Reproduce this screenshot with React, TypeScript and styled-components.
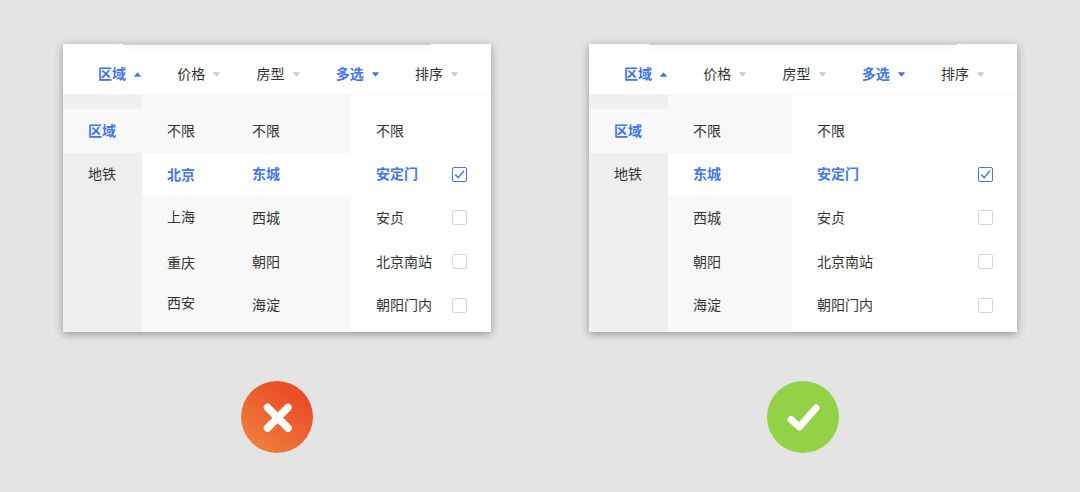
import React, { useState } from 'react';
import styled, { createGlobalStyle, css } from 'styled-components';

const GlobalStyle = createGlobalStyle`
  *, *::before, *::after { box-sizing: border-box; }
  body {
    margin: 0;
    background: #e4e4e4;
    color: #333;
    font-family: "Noto Sans CJK SC", "Noto Sans", sans-serif;
    font-size: 14px;
    line-height: 20px;
  }
  button { margin: 0; border: 0; padding: 0; background: none; font: inherit; color: inherit; cursor: pointer; }
`;

const BLUE = '#4375f0';

const Page = styled.main`
  display: grid;
  grid-template-columns: 1fr 1fr;
  column-gap: 98px;
  padding: 44px 63px 39px;
`;

const Example = styled.section`
  display: flex;
  flex-direction: column;
  align-items: center;
  gap: 49px;
`;

const Card = styled.div`
  width: 100%;
  background: #fff;
  box-shadow: 0 2px 8px rgba(0, 0, 0, 0.36);
`;

const TabBar = styled.nav`
  position: relative;
  display: flex;
  justify-content: space-between;
  overflow: hidden;
  padding: 19px 33px 9px 35px;
  border-bottom: 1px solid #f5f5f5;

  &::before {
    content: '';
    position: absolute;
    top: 0;
    left: 14%;
    right: 14%;
    height: 1px;
    background: #d2d2d2;
    box-shadow: 0 2px 10px rgba(0, 0, 0, 0.24);
  }
`;

const active = css`
  color: ${BLUE};
  font-weight: 600;
`;

const Tab = styled.button<{ $active?: boolean }>`
  display: flex;
  align-items: center;
  gap: 8px;
  ${(p) => p.$active && active}
`;

const Label = styled.span`
  padding-bottom: 2px;
`;

const Arrow = styled.svg<{ $active?: boolean; $up?: boolean }>`
  width: 7px;
  height: 5px;
  fill: ${(p) => (p.$active ? BLUE : '#ccc')};
  transform: ${(p) => (p.$up ? 'rotate(180deg)' : 'none')};
`;

const Columns = styled.div`
  display: flex;
  min-height: 237px;
`;

const Column = styled.div<{ $width?: number; $tone: string; $rows?: string }>`
  display: grid;
  grid-template-rows: ${(p) => p.$rows ?? 'repeat(5, 1fr)'};
  flex: ${(p) => (p.$width ? `0 0 ${p.$width}px` : '1')};
  padding: 14px 0 5px;
  background: ${(p) => p.$tone};
`;

const Option = styled.button<{ $active?: boolean; $fill?: string }>`
  display: flex;
  align-items: center;
  padding-left: 25px;
  text-align: left;
  ${(p) => p.$active && active}
  background: ${(p) => (p.$active && p.$fill) || 'transparent'};
`;

const CheckOption = styled.label<{ $active?: boolean }>`
  display: flex;
  align-items: center;
  justify-content: space-between;
  padding: 0 24px 0 25px;
  cursor: pointer;
  ${(p) => p.$active && active}
`;

const BoxWrap = styled.span`
  display: grid;
  width: 15px;
  height: 15px;

  & > * { grid-area: 1 / 1; }
`;

const Box = styled.input`
  appearance: none;
  width: 15px;
  height: 15px;
  margin: 0;
  border: 1px solid #d6d6da;
  border-radius: 2px;
  background: #fff;

  &:checked { border-color: ${BLUE}; }
`;

const Tick = styled.svg`
  width: 15px;
  height: 15px;
  pointer-events: none;
  fill: none;
  stroke: ${BLUE};
  stroke-width: 1.5;
`;

const Badge = styled.svg`
  width: 72px;
  height: 72px;
`;

const tabs = [
  { name: '区域', active: true, up: true },
  { name: '价格' },
  { name: '房型' },
  { name: '多选', active: true },
  { name: '排序' },
];
const sides = ['区域', '地铁'];
const cities = ['不限', '北京', '上海', '重庆', '西安'];
const districts = ['不限', '东城', '西城', '朝阳', '海淀'];
const places = ['安定门', '安贞', '北京南站', '朝阳门内'];

interface ListProps {
  items: string[];
  initial: string;
  tone: string;
  fill: string;
  width: number;
  rows?: string;
}

function OptionList({ items, initial, tone, fill, width, rows }: ListProps) {
  const [picked, setPicked] = useState(initial);
  return (
    <Column $width={width} $tone={tone} $rows={rows}>
      {items.map((item) => (
        <Option
          key={item}
          type="button"
          $active={item === picked}
          $fill={fill}
          onClick={() => setPicked(item)}
        >
          <Label>{item}</Label>
        </Option>
      ))}
    </Column>
  );
}

function PlaceList() {
  const [checked, setChecked] = useState<string[]>(['安定门']);
  const toggle = (name: string) =>
    setChecked((list) => (list.includes(name) ? list.filter((n) => n !== name) : [...list, name]));
  return (
    <Column $tone="#fff">
      <Option type="button" onClick={() => setChecked([])}>
        <Label>不限</Label>
      </Option>
      {places.map((name) => {
        const on = checked.includes(name);
        return (
          <CheckOption key={name} $active={on}>
            <Label>{name}</Label>
            <BoxWrap>
              <Box type="checkbox" checked={on} onChange={() => toggle(name)} />
              {on && (
                <Tick viewBox="0 0 15 15" aria-hidden="true">
                  <path d="M3.3 7.4 6.2 10.7 12 3.8" />
                </Tick>
              )}
            </BoxWrap>
          </CheckOption>
        );
      })}
    </Column>
  );
}

function FilterCard({ withCities }: { withCities?: boolean }) {
  return (
    <Card>
      <TabBar>
        {tabs.map((tab) => (
          <Tab key={tab.name} type="button" $active={tab.active}>
            <Label>{tab.name}</Label>
            <Arrow viewBox="0 0 7 5" $active={tab.active} $up={tab.up} aria-hidden="true">
              <path d="M.7.3h5.6q.9 0 .4.7L4 4.3q-.5.5-1 0L.3 1Q-.2.3.7.3Z" />
            </Arrow>
          </Tab>
        ))}
      </TabBar>
      <Columns>
        <OptionList
          items={sides}
          initial="区域"
          tone="#efefef"
          fill="#f8f8f8"
          width={79}
        />
        {withCities && (
          <OptionList
            items={cities}
            initial="北京"
            tone="#f8f8f8"
            fill="#fff"
            width={85}
            rows="44px 43px 42px 50px 30px"
          />
        )}
        <OptionList items={districts} initial="东城" tone="#f8f8f8" fill="#fff" width={124} />
        <PlaceList />
      </Columns>
    </Card>
  );
}

export default function App() {
  return (
    <>
      <GlobalStyle />
      <Page>
        <Example>
          <FilterCard withCities />
          <Badge viewBox="0 0 72 72" role="img" aria-label="错误">
            <defs>
              <linearGradient id="wrong" x1="0.2" y1="0.9" x2="0.7" y2="0.2">
                <stop offset="0" stopColor="#ef7d3c" />
                <stop offset="1" stopColor="#ea5027" />
              </linearGradient>
            </defs>
            <circle cx="36" cy="36" r="36" fill="url(#wrong)" />
            <path d="M26.5 26.5 47 47M47 26.5 26.5 47" stroke="#fff" strokeWidth="7.5" strokeLinecap="round" />
          </Badge>
        </Example>
        <Example>
          <FilterCard />
          <Badge viewBox="0 0 72 72" role="img" aria-label="正确">
            <circle cx="36" cy="36" r="36" fill="#93d147" />
            <path
              d="M24 38.5 32.3 46 49 27"
              fill="none"
              stroke="#fff"
              strokeWidth="7"
              strokeLinecap="round"
              strokeLinejoin="round"
            />
          </Badge>
        </Example>
      </Page>
    </>
  );
}
